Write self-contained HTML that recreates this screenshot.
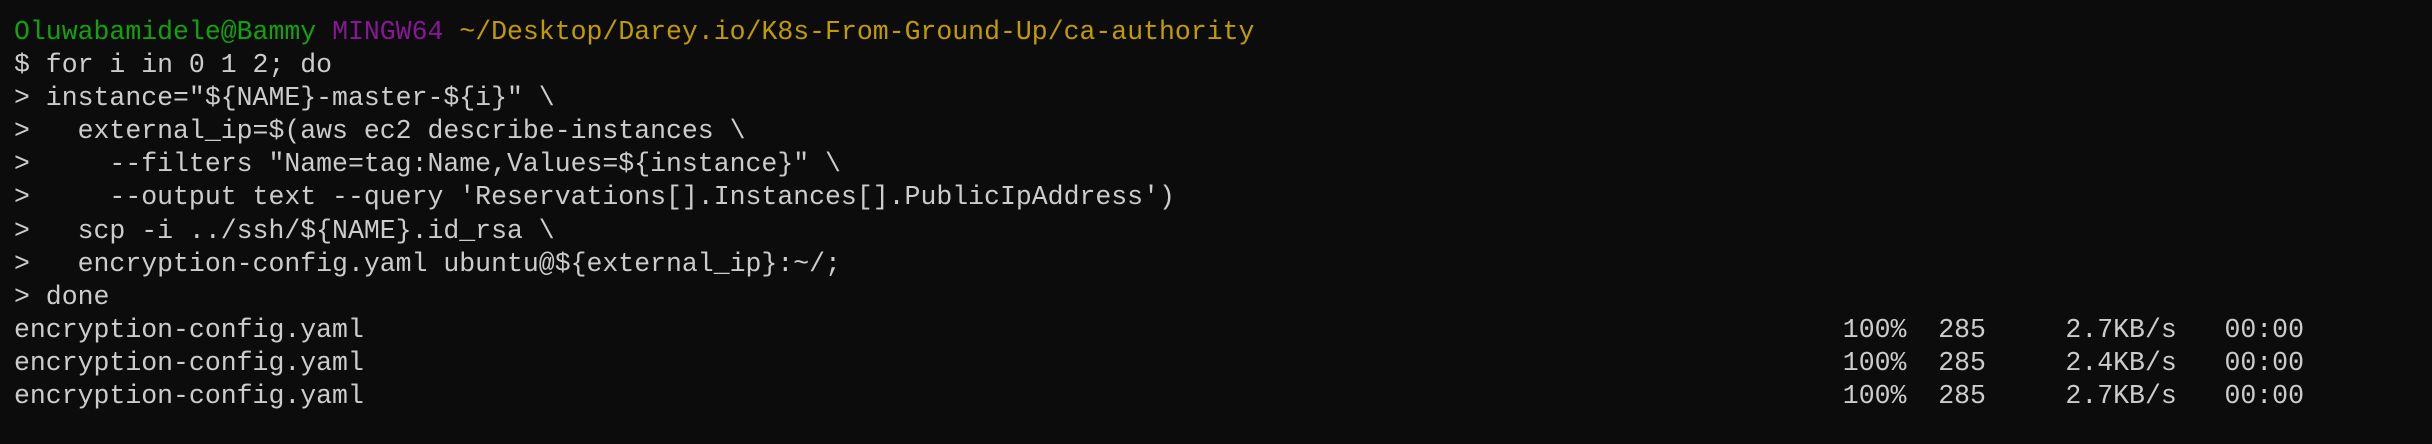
<!DOCTYPE html>
<html><head><meta charset="utf-8"><style>
html,body{margin:0;padding:0;background:#0c0c0c;width:2432px;height:444px;overflow:hidden}
pre{margin:0;position:absolute;left:14px;top:16px;font-family:"Liberation Mono",monospace;font-size:26.5px;line-height:33.1px;color:#cccccc;white-space:pre}
.g{color:#13a10e}.p{color:#881798}.y{color:#c19c00}
</style></head><body>
<pre><span class="g">Oluwabamidele@Bammy</span> <span class="p">MINGW64</span> <span class="y">~/Desktop/Darey.io/K8s-From-Ground-Up/ca-authority</span>
$ for i in 0 1 2; do
> instance="${NAME}-master-${i}" \
>   external_ip=$(aws ec2 describe-instances \
>     --filters "Name=tag:Name,Values=${instance}" \
>     --output text --query 'Reservations[].Instances[].PublicIpAddress')
>   scp -i ../ssh/${NAME}.id_rsa \
>   encryption-config.yaml ubuntu@${external_ip}:~/;
> done
encryption-config.yaml                                                                                             100%  285     2.7KB/s   00:00
encryption-config.yaml                                                                                             100%  285     2.4KB/s   00:00
encryption-config.yaml                                                                                             100%  285     2.7KB/s   00:00
</pre>
</body></html>
